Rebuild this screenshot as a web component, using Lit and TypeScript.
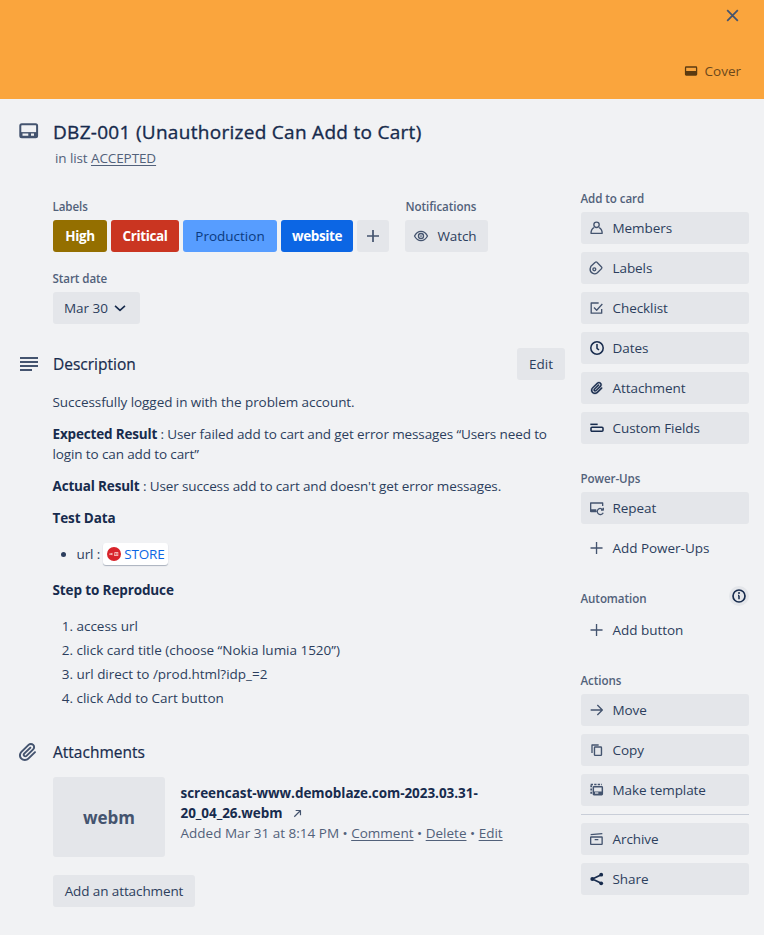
import { LitElement, html, css, svg, nothing, type TemplateResult } from "lit";
import { customElement, property } from "lit/decorators.js";

const clip = "M11.6426 17.9647C10.1123 19.46 7.62736 19.4606 6.10092 17.9691C4.57505 16.478 4.57769 14.0467 6.10253 12.5566L13.2505 5.57184C14.1476 4.6952 15.5861 4.69251 16.4832 5.56915C17.3763 6.44184 17.3778 7.85135 16.4869 8.72199L9.78361 15.2722C9.53288 15.5172 9.12807 15.5163 8.86954 15.2636C8.61073 15.0107 8.60963 14.6158 8.86954 14.3618L15.0989 8.27463C15.4812 7.90109 15.4812 7.29546 15.0989 6.92192C14.7167 6.54838 14.0969 6.54838 13.7146 6.92192L7.48523 13.0091C6.45911 14.0118 6.46356 15.618 7.48523 16.6163C8.50674 17.6145 10.1511 17.6186 11.1679 16.6249L17.8712 10.0747C19.5274 8.45632 19.5244 5.83555 17.8676 4.2165C16.2047 2.59156 13.5266 2.59657 11.8662 4.21913L4.71822 11.2039C2.42951 13.4404 2.42555 17.083 4.71661 19.3218C7.00774 21.5606 10.7323 21.5597 13.0269 19.3174L19.7133 12.7837C20.0956 12.4101 20.0956 11.8045 19.7133 11.431C19.331 11.0574 18.7113 11.0574 18.329 11.431L11.6426 17.9647Z";

// All glyphs live on a 24-unit grid and take their colour from the text.
const icons: Record<string, TemplateResult> = {
  close: svg`<path d="M3.5 3.5 20.5 20.5M20.5 3.5 3.5 20.5" stroke-width="2.8"/>`,
  cover: svg`<rect x="3.8" y="6" width="16.600" height="12" rx="1" stroke-width="1.9"/><path class="f" d="M3.500 12h17v6h-17z"/>`,
  card: svg`<rect x="3.300" y="5.300" width="16.800" height="12.900" rx="1.5" stroke-width="2"/><path d="M3.300 15.600h16.800" stroke-width="5" stroke-linecap="butt"/><path class="bg" d="M5.500 14.500h5.800v2.200H5.500zM14 14.500h3v2.200h-3z"/>`,
  lines: svg`<path d="M3 6h18M3 10h18M3 14h18M3 18h12" stroke-width="2"/>`,
  clip: svg`<path class="f" d=${clip}/>`,
  clipbold: svg`<path d=${clip} fill="currentColor" stroke-width=".5"/>`,
  plus: svg`<path d="M11.300 3v18M2.300 12h18" stroke-width="2"/>`,
  plusbold: svg`<path d="M12 3v18M3 12h18" stroke-width="2.600"/>`,
  eye: svg`<path d="M2.300 12C4.500 7.800 8 5 12 5s7.500 2.800 9.700 7c-2.200 4.200-5.700 7-9.700 7s-7.500-2.800-9.700-7Z"/><circle cx="12" cy="12" r="3.800"/><circle class="f" cx="12" cy="12" r="1.300"/>`,
  down: svg`<path d="m3.500 8.500 8.500 7.500 8.500-7.500" stroke-width="2.800"/>`,
  member: svg`<circle cx="11.300" cy="7.300" r="4"/><path d="M7.500 11.500C4.700 13 3 16 3 20h16.800c0-4-1.800-7-4.700-8.500"/>`,
  label: svg`<path d="m1.700 13.200 1.200-3.800 6.500-6a1.800 1.800 0 0 1 2.500 0l6.900 7a1.800 1.800 0 0 1 0 2.500l-6.200 6.200a6.700 6.700 0 0 1-10.900-5.900Z"/><circle cx="8" cy="14" r="2.200"/>`,
  check: svg`<path d="M14.500 4.500H3.300V19.800H19V13.500"/><path d="m7.500 11.300 4 4L20 6"/>`,
  clock: svg`<circle cx="12" cy="12" r="9.300" stroke-width="2.300"/><path d="M12 6v6.500l3 2.500" stroke-width="2.300"/>`,
  fields: svg`<path d="M2 6.500h11" stroke-width="2.300"/><rect x="3" y="11" width="18" height="6" rx="1.500" stroke-width="2.300"/>`,
  repeat: svg`<path d="M11.500 17H2.500V4.500h18V9"/><path class="f" d="M1.500 14H11v4.500H2.500z"/><path d="M21 15a4.600 4.600 0 1 0 .3 4M21.500 11.500V15H18" stroke-width="1.900"/>`,
  info: svg`<circle cx="12" cy="12" r="9" stroke-width="2.500"/><path d="M12 11.200V17M10.500 11.200H12" stroke-width="2.300"/><circle class="f" cx="12" cy="7.600" r="1.500"/>`,
  arrow: svg`<path d="M2.500 12h17M12.500 4.500l7.500 7.500-7.500 7.500"/>`,
  copy: svg`<rect x="8.200" y="7.500" width="10.500" height="12.500" rx="1" stroke-width="2.100"/><path d="M4.500 16.500v-12h10" stroke-width="2"/>`,
  template: svg`<rect x="6.500" y="7" width="13.500" height="12" rx="1" stroke-width="2.200"/><path d="M6.500 16.500H20" stroke-width="4.500"/><path class="btn" d="M9 15.500h5v2H9z"/><path d="M3.300 5v13.500" stroke-width="2.600" stroke-dasharray="3 1.800" stroke-linecap="butt"/><path d="M2.500 3.700h17" stroke-width="2.500" stroke-dasharray="3.500 1.800" stroke-linecap="butt"/>`,
  archive: svg`<rect x="2.500" y="9" width="17.200" height="11" rx=".5"/><path d="M2.500 5.500 20 4M8.500 13h5.500"/>`,
  share: svg`<path d="M18.500 5.500 5 12l13.500 6.500" stroke-width="2.400"/><circle class="f" cx="18.300" cy="5.500" r="2.900"/><circle class="f" cx="5" cy="12" r="3"/><circle class="f" cx="18.300" cy="18.500" r="2.900"/>`,
  northeast: svg`<path d="M5 19 18 6M8 5.500h10.500V16" stroke-width="2.600"/>`,
};

@customElement("ui-icon")
export class UiIcon extends LitElement {
  @property() name = "";
  static styles = css`
    :host { display: inline-flex; flex: none; width: 16px; height: 16px; }
    svg { width: 100%; height: 100%; fill: none; stroke: currentColor; stroke-width: 2; stroke-linejoin: round; overflow: visible; }
    .f { fill: currentColor; stroke: none; }
    .bg { fill: #f1f2f4; stroke: none; }
    .btn { fill: #e4e6ea; stroke: none; }
  `;
  render() {
    return html`<svg viewBox="0 0 24 24" aria-hidden="true">${icons[this.name] ?? nothing}</svg>`;
  }
}

@customElement("side-button")
export class SideButton extends LitElement {
  @property() icon = "";
  @property() label = "";
  @property({ type: Boolean }) plain = false;
  @property({ type: Boolean }) dark = false;
  static styles = css`
    :host { display: block; margin-bottom: 8px; }
    .b { display: flex; align-items: center; gap: 7.5px; width: 100%; height: 32px; padding: 0 8px; box-sizing: border-box; border: 0; border-radius: 3px; background: #e4e6ea; color: #2c3e5d; font: inherit; letter-spacing: -.07px; text-align: left; }
    .plain { background: transparent; letter-spacing: -.03px; }
    ui-icon { color: #44546f; }
    .dark ui-icon { color: #172b4d; }
  `;
  render() {
    return html`<button class="b ${this.plain ? "plain" : ""} ${this.dark ? "dark" : ""}"><ui-icon name=${this.icon}></ui-icon><span>${this.label}</span></button>`;
  }
}

@customElement("app-root")
export class AppRoot extends LitElement {
  static styles = css`
    :host { display: block; height: 935px; overflow: hidden; background: #f1f2f4; color: #2c3e5d; font: 13.5px/20px "Open Sans", "Noto Sans", sans-serif; }
    * { box-sizing: border-box; }
    h1, h2, h3, p, ul, ol { margin: 0; padding: 0; font-weight: inherit; }
    button { border: 0; border-radius: 3px; height: 32px; padding: 0; background: #e4e6ea; color: inherit; font: inherit; letter-spacing: inherit; display: flex; align-items: center; justify-content: center; white-space: nowrap; }
    .cover { height: 99px; background: #faa53d; display: flex; flex-direction: column; justify-content: space-between; align-items: flex-end; padding: 7px 23px 18px 0; }
    .close { width: 17px; height: 17px; display: flex; align-items: center; justify-content: center; color: #44546f; }
    .close ui-icon { width: 15px; height: 15px; }
    .coverbtn { display: flex; align-items: center; gap: 6px; color: #6b481c; height: 21px; }
    .coverbtn ui-icon { color: #5b3a10; }
    .title { display: flex; padding: 20px 0 0 17px; height: 94px; }
    .lead { width: 24px; height: 24px; margin-right: 12px; color: #44546f; }
    h1 { font-size: 19px; line-height: 26px; color: #172b4d; font-weight: 400; letter-spacing: .29px; -webkit-text-stroke: .35px #172b4d; }
    .sub { padding-left: 2px; line-height: 20px; margin-top: 3px; color: #52617a; letter-spacing: -.1px; }
    a { color: inherit; text-decoration: underline; text-underline-offset: 2px; text-decoration-thickness: 1px; }
    .cols { display: grid; grid-template-columns: 512px 168px; column-gap: 16px; padding-left: 53px; }
    .meta { display: flex; gap: 16px; padding-top: 4px; }
    h3 { font-size: 11.6px; line-height: 20px; font-weight: 600; color: #52617a; margin: 0 0 3px -.5px; letter-spacing: -.08px; }
    .notify h3 { margin-left: .5px; }
    .tags { display: flex; gap: 4px; }
    .tag { height: 32px; border-radius: 3px; display: flex; align-items: center; justify-content: center; color: #fff; font-weight: 700; letter-spacing: -.4px; }
    .high { width: 54px; background: #946f00; }
    .critical { width: 68px; background: #ca3521; }
    .production { width: 94px; background: #579dff; color: #0a3a80; font-weight: 400; letter-spacing: 0; }
    .website { width: 72px; background: #0c66e4; }
    .add { width: 32px; color: #44546f; }
    .watch { width: 83px; gap: 8px; padding-right: 3px; letter-spacing: -.1px; }
    .watch ui-icon { color: #44546f; }
    .start { margin-top: 17px; }
    .date { width: 87px; gap: 5px; padding-right: 2px; }
    .date ui-icon { width: 14px; height: 14px; color: #172b4d; }
    .section { display: flex; align-items: center; height: 32px; margin-left: -36px; }
    h2 { flex: 1; font-size: 15.5px; line-height: 20px; font-weight: 400; color: #172b4d; -webkit-text-stroke: .2px #172b4d; }
    .desc { margin-top: 24px; }
    .edit { width: 48px; }
    .text { padding-top: 12px; margin-left: -.5px; }
    .text p { margin-bottom: 12px; letter-spacing: -.06px; }
    .text .tight { letter-spacing: -.12px; }
    strong { color: #172b4d; font-weight: 700; }
    .tight strong { letter-spacing: -.17px; }
    .text .head strong { letter-spacing: -.12px; }
    .text ul { padding-left: 24px; margin: 15px 0 15px; height: 22px; }
    .text ol { padding-left: 24px; margin-top: 16px; letter-spacing: -.02px; }
    ol li { margin-bottom: 4px; }
    ul li { line-height: 22px; }
    .url { display: flex; align-items: center; gap: 2.5px; letter-spacing: -.1px; }
    .store { display: flex; align-items: center; gap: 3.5px; width: 65px; height: 22px; padding-left: 4px; border-radius: 3px; background: #fff; color: #0c66e4; box-shadow: 0 1px 1px #a9b1bd; letter-spacing: -.2px; }
    .logo { width: 14px; height: 14px; flex: none; }
    .attach { margin-top: 28px; margin-left: -37px; }
    .attach .lead { margin-right: 13px; }
    .file { display: flex; gap: 15.5px; margin-top: 9px; }
    .thumb { width: 112px; height: 80px; padding-top: 2px; border-radius: 3px; background: #e4e6ea; display: flex; align-items: center; justify-content: center; font-size: 17px; font-weight: 700; color: #44546f; }
    .info { padding-top: 6px; color: #52617a; white-space: nowrap; letter-spacing: .01px; }
    .info strong { display: block; letter-spacing: -.05px; }
    .info ui-icon { width: 11px; height: 11px; margin-left: 6px; vertical-align: -1px; color: #44546f; }
    .addfile { width: 142px; margin-top: 18px; letter-spacing: -.1px; }
    .side { margin-top: -4px; }
    .group { margin-bottom: 25px; }
    .auto { display: flex; justify-content: space-between; align-items: flex-start; height: 25px; }
    .badge { width: 20px; height: 20px; margin-top: -3px; border-radius: 50%; background: #e4e6ea; color: #172b4d; display: flex; align-items: center; justify-content: center; }
    .rule { border-top: 1px solid #c9ced8; margin-bottom: 8px; }
  `;

  render() {
    return html`
      <header class="cover">
        <span class="close"><ui-icon name="close"></ui-icon></span>
        <span class="coverbtn"><ui-icon name="cover"></ui-icon>Cover</span>
      </header>
      <div class="title">
        <ui-icon class="lead" name="card"></ui-icon>
        <div><h1>DBZ-001 (Unauthorized Can Add to Cart)</h1><p class="sub">in list <a>ACCEPTED</a></p></div>
      </div>
      <div class="cols">
        <main>
          <div class="meta">
            <section><h3>Labels</h3>
              <div class="tags">
                <span class="tag high">High</span><span class="tag critical">Critical</span><span class="tag production">Production</span><span class="tag website">website</span>
                <button class="add"><ui-icon name="plusbold"></ui-icon></button>
              </div>
            </section>
            <section class="notify"><h3>Notifications</h3><button class="watch"><ui-icon name="eye"></ui-icon>Watch</button></section>
          </div>
          <section class="start"><h3>Start date</h3><button class="date">Mar 30<ui-icon name="down"></ui-icon></button></section>
          <div class="section desc"><ui-icon class="lead" name="lines"></ui-icon><h2>Description</h2><button class="edit">Edit</button></div>
          <div class="text">
            <p>Successfully logged in with the problem account.</p>
            <p class="tight"><strong>Expected Result</strong> : User failed add to cart and get error messages “Users need to<br>login to can add to cart”</p>
            <p class="tight"><strong>Actual Result</strong> : User success add to cart and doesn't get error messages.</p>
            <p class="head"><strong>Test Data</strong></p>
            <ul><li><span class="url">url :
              <span class="store"><svg class="logo" viewBox="0 0 14 14"><circle cx="7" cy="7" r="7" fill="#d8232a"/><path d="M2 6.800 5.500 5.700v2.600L2 7.600ZM7.500 5h3.800v4H7z" fill="#f3b3b0"/><path d="M8.500 6v2M10 6v2" stroke="#d8232a" stroke-width=".6"/></svg>STORE</span>
            </span></li></ul>
            <p class="head"><strong>Step to Reproduce</strong></p>
            <ol><li>access url</li><li>click card title (choose “Nokia lumia 1520”)</li><li>url direct to /prod.html?idp_=2</li><li>click Add to Cart button</li></ol>
          </div>
          <div class="section attach"><ui-icon class="lead" name="clip"></ui-icon><h2>Attachments</h2></div>
          <div class="file">
            <div class="thumb">webm</div>
            <div class="info">
              <strong>screencast-www.demoblaze.com-2023.03.31-<br>20_04_26.webm <ui-icon name="northeast"></ui-icon></strong>
              Added Mar 31 at 8:14 PM • <a>Comment</a> • <a>Delete</a> • <a>Edit</a>
            </div>
          </div>
          <button class="addfile">Add an attachment</button>
        </main>
        <aside class="side">
          <div class="group"><h3>Add to card</h3>
            <side-button icon="member" label="Members"></side-button>
            <side-button icon="label" label="Labels"></side-button>
            <side-button icon="check" label="Checklist"></side-button>
            <side-button icon="clock" label="Dates" dark></side-button>
            <side-button icon="clipbold" label="Attachment" dark></side-button>
            <side-button icon="fields" label="Custom Fields" dark></side-button>
          </div>
          <div class="group"><h3>Power-Ups</h3>
            <side-button icon="repeat" label="Repeat"></side-button>
            <side-button icon="plus" label="Add Power-Ups" plain></side-button>
          </div>
          <div class="group"><div class="auto"><h3>Automation</h3><span class="badge"><ui-icon name="info"></ui-icon></span></div>
            <side-button icon="plus" label="Add button" plain></side-button>
          </div>
          <div><h3>Actions</h3>
            <side-button icon="arrow" label="Move"></side-button>
            <side-button icon="copy" label="Copy"></side-button>
            <side-button icon="template" label="Make template"></side-button>
            <div class="rule"></div>
            <side-button icon="archive" label="Archive"></side-button>
            <side-button icon="share" label="Share" dark></side-button>
          </div>
        </aside>
      </div>`;
  }
}
